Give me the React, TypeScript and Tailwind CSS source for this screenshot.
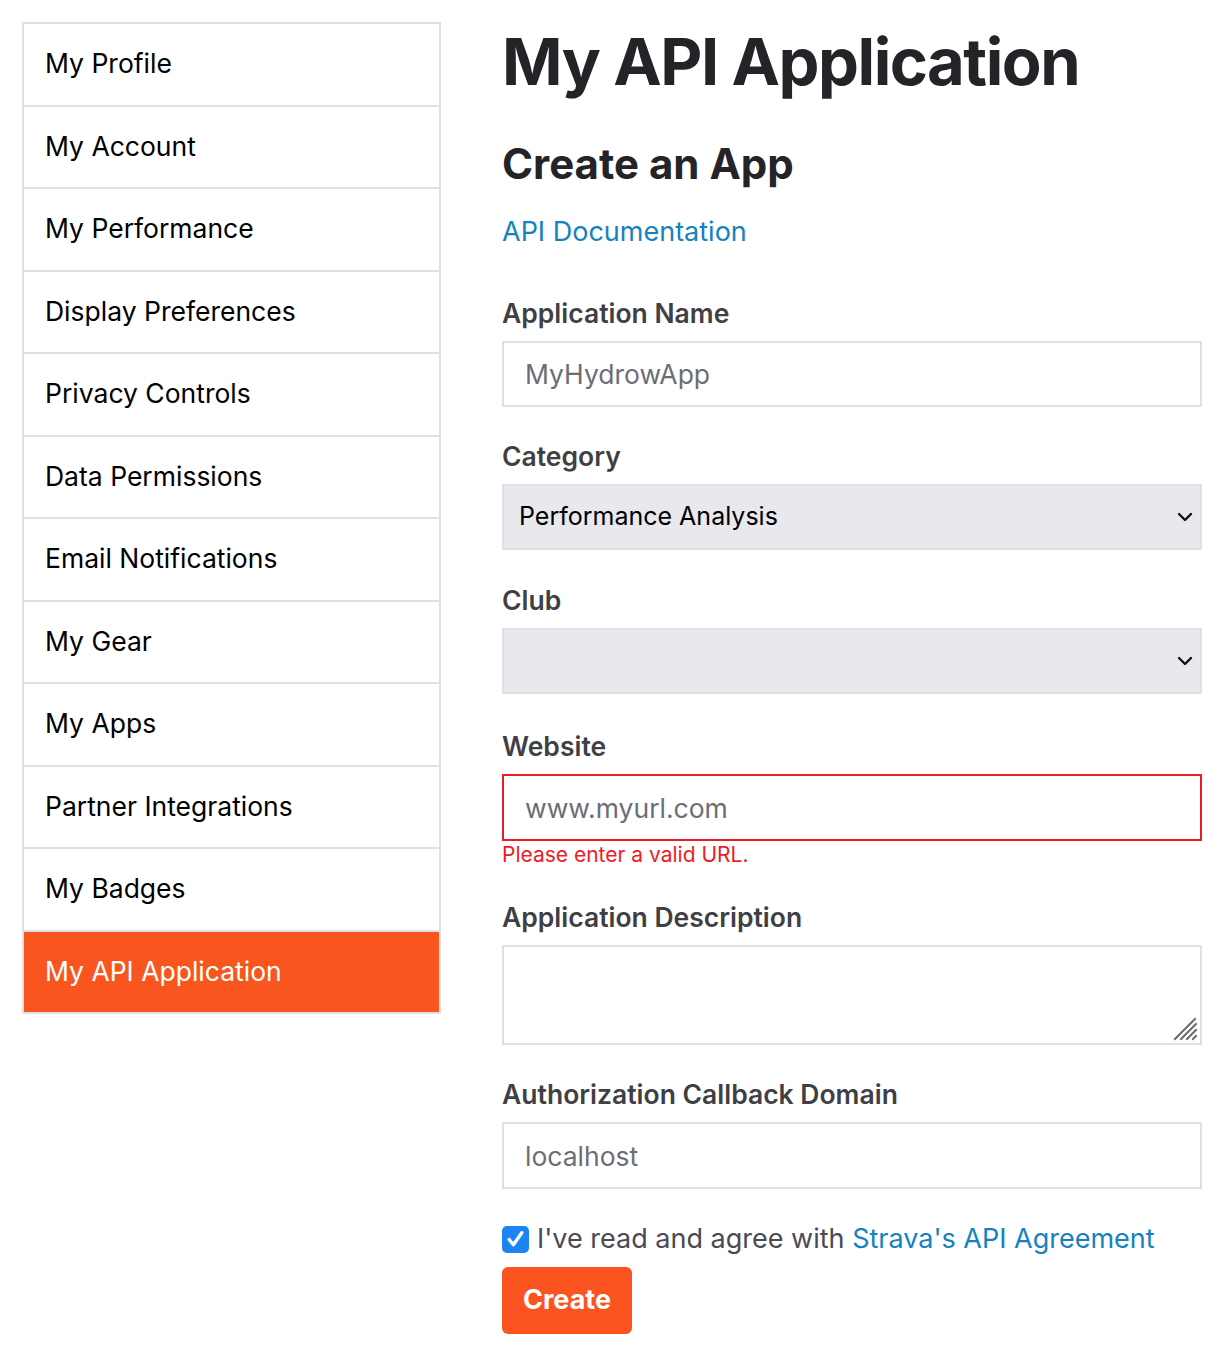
import { useState } from "react";

const navItems = [
  "My Profile",
  "My Account",
  "My Performance",
  "Display Preferences",
  "Privacy Controls",
  "Data Permissions",
  "Email Notifications",
  "My Gear",
  "My Apps",
  "Partner Integrations",
  "My Badges",
  "My API Application",
];

function Label({ children }: { children: React.ReactNode }) {
  return <label className="mb-[11px] block text-[26.5px] font-semibold leading-[34px] text-[#3f3f45]">{children}</label>;
}

function Chevron() {
  return (
    <svg width="16" height="10" viewBox="0 0 16 10" className="pointer-events-none absolute right-[9px] top-1/2 -translate-y-1/2">
      <polyline points="2,2 8,8 14,2" fill="none" stroke="#111" strokeWidth="2.4" strokeLinecap="round" strokeLinejoin="round" />
    </svg>
  );
}

export default function App() {
  const [agreed, setAgreed] = useState(true);

  return (
    <div className="min-h-screen bg-white font-['Inter',sans-serif] text-[#242428]">
      <div className="flex gap-[61px] px-[22px] pt-[22px]">
        <nav className="w-[419px] shrink-0 self-start border-2 border-[#dfdfe8]">
          {navItems.map((item, i) => {
            const last = i === navItems.length - 1;
            return (
              <a
                key={item}
                href="#"
                className={`flex items-center px-[21px] text-[26.5px] ${
                  last ? "h-[80px] bg-[#f9561f] text-white" : "h-[82.5px] border-b-2 border-[#dfdfe8] text-black"
                }`}
              >
                {item}
              </a>
            );
          })}
        </nav>

        <main className="w-[700px]">
          <h1 className="text-[65px] font-bold leading-[80px] tracking-[-1.5px] text-[#242428]">My API Application</h1>
          <h2 className="mt-[36px] text-[42px] font-bold leading-[52px] text-[#242428]">Create an App</h2>
          <a href="#" className="mt-[25px] block text-[27px] leading-[34px] text-[#1582c0]">
            API Documentation
          </a>

          <div className="mt-[47px] mb-[32px]">
            <Label>Application Name</Label>
            <input
              placeholder="MyHydrowApp"
              className="block h-[66px] w-full border-2 border-[#dfdfe8] px-[21px] text-[26.5px] text-[#242428] outline-none placeholder:text-[#6d6d78]"
            />
          </div>

          <div className="mb-[33px]">
            <Label>Category</Label>
            <div className="relative">
              <select
                defaultValue="perf"
                className="block h-[66px] w-full appearance-none border-2 border-[#dfdfe8] bg-[#e8e8ed] px-[15px] text-[25px] text-black outline-none"
              >
                <option value="perf">Performance Analysis</option>
              </select>
              <Chevron />
            </div>
          </div>

          <div className="mb-[35px]">
            <Label>Club</Label>
            <div className="relative">
              <select className="block h-[66px] w-full appearance-none border-2 border-[#dfdfe8] bg-[#e8e8ed] px-[15px] text-[25px] text-black outline-none">
                <option value=""></option>
              </select>
              <Chevron />
            </div>
          </div>

          <div className="mb-[33px]">
            <Label>Website</Label>
            <input
              placeholder="www.myurl.com"
              className="block h-[67px] w-full border-2 border-[#ee1c25] px-[21px] text-[26.5px] text-[#242428] outline-none placeholder:text-[#6d6d78]"
            />
            <p className="mt-[2px] text-[21px] leading-[24px] text-[#ee1c25]">Please enter a valid URL.</p>
          </div>

          <div className="mb-[32px]">
            <Label>Application Description</Label>
            <div className="relative">
              <textarea className="block h-[100px] w-full resize-none border-2 border-[#dfdfe8] px-[21px] py-[10px] text-[26px] outline-none" />
              <svg width="26" height="26" viewBox="0 0 26 26" className="pointer-events-none absolute bottom-[3px] right-[3px]">
                <g stroke="#6b6b6b" strokeWidth="2" strokeLinecap="square">
                  <line x1="2" y1="23" x2="22" y2="3" />
                  <line x1="8" y1="23" x2="23" y2="8" />
                  <line x1="14" y1="23" x2="23" y2="14" />
                  <line x1="20" y1="23" x2="23" y2="20" />
                </g>
              </svg>
            </div>
          </div>

          <div className="mb-[33px]">
            <Label>Authorization Callback Domain</Label>
            <input
              placeholder="localhost"
              className="block h-[67px] w-full border-2 border-[#dfdfe8] px-[21px] text-[26.5px] text-[#242428] outline-none placeholder:text-[#6d6d78]"
            />
          </div>

          <label className="flex items-center gap-[8px] text-[27px] leading-[34px] text-[#4a4a52]">
            <button
              type="button"
              onClick={() => setAgreed(!agreed)}
              className={`flex h-[27px] w-[27px] items-center justify-center rounded-[5px] ${
                agreed ? "bg-[#1a84f2]" : "border-2 border-[#888] bg-white"
              }`}
            >
              {agreed && (
                <svg width="21" height="21" viewBox="0 0 20 20">
                  <polyline points="4,10 8,15 16,3.5" fill="none" stroke="white" strokeWidth="3.2" strokeLinecap="round" strokeLinejoin="round" />
                </svg>
              )}
            </button>
            <span>
              I've read and agree with{" "}
              <a href="#" className="text-[#1582c0]">
                Strava's API Agreement
              </a>
            </span>
          </label>

          <button
            type="submit"
            className="mt-[11px] mb-[30px] h-[67px] w-[130px] rounded-[6px] bg-[#fc5420] text-[27px] font-bold text-white"
          >
            Create
          </button>
        </main>
      </div>
    </div>
  );
}
